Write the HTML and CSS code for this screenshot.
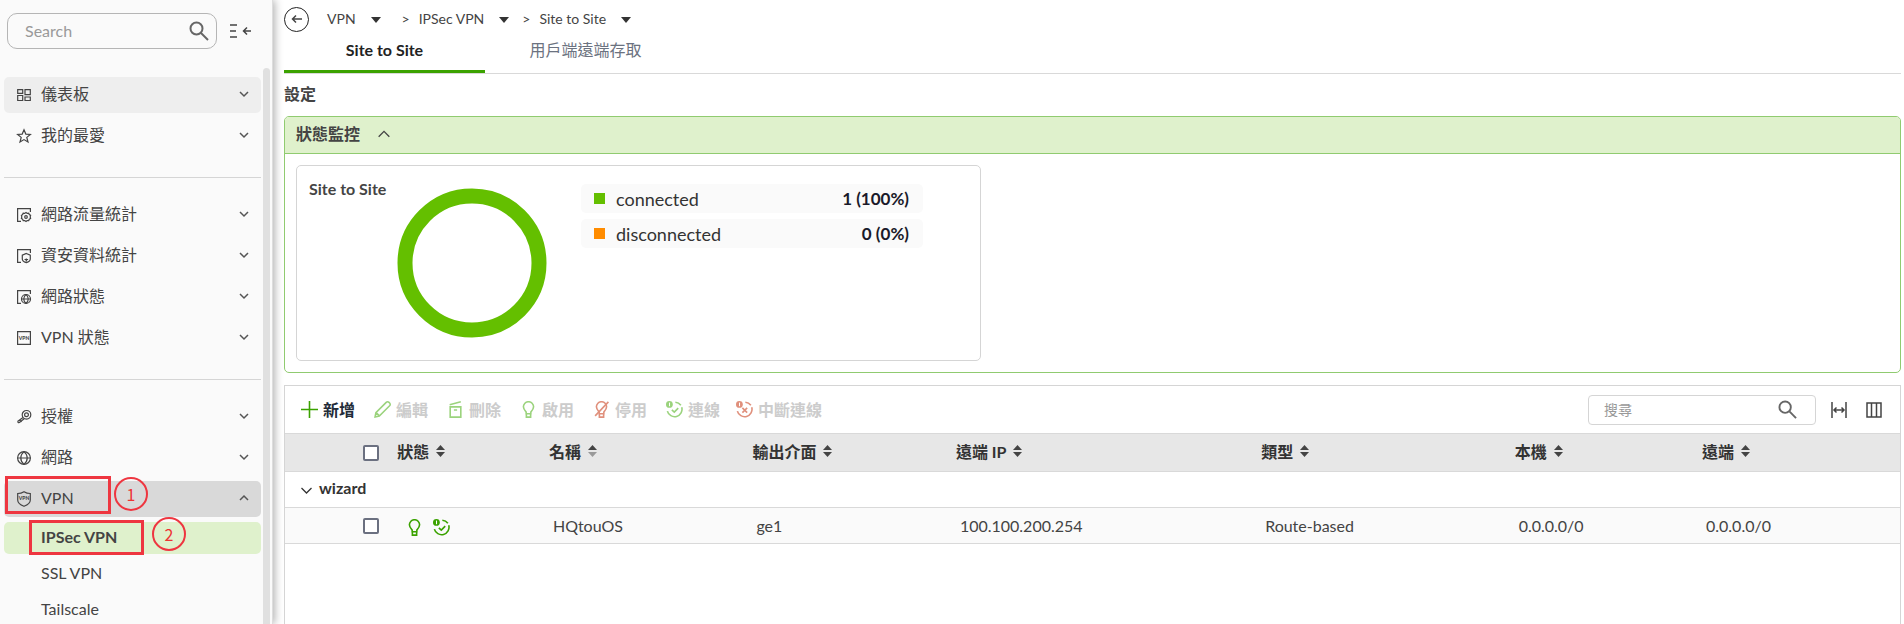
FILE: index.html
```
<!DOCTYPE html>
<html lang="zh-Hant">
<head>
    <meta charset="UTF-8">
    <meta name="viewport" content="width=device-width, initial-scale=1.0">
    <title>IPSec VPN - Site to Site</title>
    <link rel="stylesheet" href="styles.css">
</head>
<body>
    <!-- Icon sprite -->
    <svg class="sprite" aria-hidden="true">
        <symbol id="i-down" viewBox="0 0 12 12"><path d="M2 4l4 4 4-4"/></symbol>
        <symbol id="i-up" viewBox="0 0 12 12"><path d="M2 8l4-4 4 4"/></symbol>
        <symbol id="i-search" viewBox="0 0 20 20"><circle cx="7.5" cy="7.5" r="6"/><path d="M12 12l7 7"/></symbol>
        <symbol id="i-caret" viewBox="0 0 10 6"><path d="M0 0h10L5 6z"/></symbol>
        <symbol id="i-sort" viewBox="0 0 9 12"><path d="M0 5L4.5 0 9 5z"/><path class="sort-down" d="M0 7h9l-4.500 5z"/></symbol>
        <symbol id="i-bulb" viewBox="0 0 16 16"><path d="M5.800 12v-1.500C4 8.500 3.200 7.500 3.200 5.500a4.800 4.800 0 0 1 9.600 0c0 2-.8 3-2.600 5V12zM6 12v3.200h4V12"/></symbol>
        <symbol id="i-link" viewBox="0 0 16 16"><circle class="solid" cx="3.200" cy="3.200" r="3.200"/><path class="mark" d="M3.300 1.500v3.400"/><path d="M8.800 1.200A7 7 0 0 1 14 4M14.800 5.800A7 7 0 1 1 1.300 9.500"/><path d="M5.500 8.300l2.300 2.200 3.700-3.800"/></symbol>
        <symbol id="i-unlink" viewBox="0 0 16 16"><circle class="solid" cx="3.200" cy="3.200" r="3.200"/><path class="mark" d="M3.300 1.500v3.400"/><path d="M8.800 1.200A7 7 0 0 1 14 4M14.800 5.800A7 7 0 1 1 1.300 9.500"/><path d="M6 6.500l4.500 4.500M10.500 6.500L6 11"/></symbol>
    </svg>

    <aside class="sidebar">
        <div class="sidebar-top">
            <label class="side-search">
                <input type="text" placeholder="Search" aria-label="Search">
                <svg class="icon"><use href="#i-search"/></svg>
            </label>
            <button class="collapse" aria-label="Collapse menu">
                <svg class="icon" viewBox="0 0 22 16"><path d="M0 2h7M0 8h6M0 14h7M21 8h-7M17 4.500L13.500 8l3.500 3.500"/></svg>
            </button>
        </div>

        <nav class="menu">
            <a class="item hover" href="#">
                <svg class="icon" viewBox="0 0 14 14"><path d="M.7 1.700h5v3.600h-5zM.7 7.500h5v5h-5zM8 1.700h5.300v5H8zM8 9h5.300v3.500H8z"/></svg>
                <span>儀表板</span><svg class="chev"><use href="#i-down"/></svg>
            </a>
            <a class="item" href="#">
                <svg class="icon" viewBox="0 0 14 14"><path d="M7 .8l1.800 4.300 4.600.3-3.600 3 1.200 4.600L7 10.600 3 13l1.200-4.600-3.600-3 4.600-.3z"/></svg>
                <span>我的最愛</span><svg class="chev"><use href="#i-down"/></svg>
            </a>
            <hr>
            <a class="item" href="#">
                <svg class="icon" viewBox="0 0 14 14"><path d="M4 13.300H.6V.7h12.800V4"/><path d="M9 4.500l1.200.9 1.500-.2.6 1.400 1.300.8-.4 1.500.4 1.500-1.300.8-.6 1.400-1.500-.1L9 13.400l-1.300-.9-1.500.1-.6-1.400-1.200-.8.4-1.500-.4-1.500 1.200-.8.6-1.400 1.500.2z"/><circle cx="9" cy="9" r="1.300"/></svg>
                <span>網路流量統計</span><svg class="chev"><use href="#i-down"/></svg>
            </a>
            <a class="item" href="#">
                <svg class="icon" viewBox="0 0 14 14"><path d="M4 13.300H.6V.7h12.800V4"/><path d="M9.300 4.500l4 1.700V10c0 1.500-2 3-4 3.600-2-.6-4-2.100-4-3.600V6.200z"/><path d="M7.500 10.500h3.600M8.500 12h1.700M9.300 9.500v2"/></svg>
                <span>資安資料統計</span><svg class="chev"><use href="#i-down"/></svg>
            </a>
            <a class="item" href="#">
                <svg class="icon" viewBox="0 0 14 14"><path d="M4 13.300H.6V.7h12.800V4"/><circle cx="9" cy="9" r="4.500"/><path d="M4.500 9h9M9 4.500c-3 2.500-3 6.500 0 9M9 4.500c3 2.500 3 6.500 0 9"/></svg>
                <span>網路狀態</span><svg class="chev"><use href="#i-down"/></svg>
            </a>
            <a class="item" href="#">
                <svg class="icon" viewBox="0 0 14 14"><path d="M.6.6h12.800v12.800H.6z"/><text x="7" y="9">VPN</text></svg>
                <span>VPN 狀態</span><svg class="chev"><use href="#i-down"/></svg>
            </a>
            <hr>
            <a class="item" href="#">
                <svg class="icon" viewBox="0 0 14 14"><circle cx="9.500" cy="4.800" r="4.300"/><circle cx="9.500" cy="4.800" r="1.900"/><path d="M6 7.500L.5 11.500M7.200 8.800L2 12.700M3 10l1.500 2M.5 11.500l1.200 1.700"/></svg>
                <span>授權</span><svg class="chev"><use href="#i-down"/></svg>
            </a>
            <a class="item" href="#">
                <svg class="icon" viewBox="0 0 14 14"><circle cx="7" cy="7" r="6.400"/><path d="M.6 7h12.800M7 .6c-4.300 3.700-4.300 9.100 0 12.800M7 .6c4.300 3.700 4.300 9.100 0 12.800"/></svg>
                <span>網路</span><svg class="chev"><use href="#i-down"/></svg>
            </a>
            <div class="group">
                <a class="item open" href="#">
                    <svg class="icon tall" viewBox="0 0 14 16"><path d="M7 .7C5 2 3 2.500.7 2.500V9c0 3 3 5 6.300 6.300C10.300 14 13.300 12 13.300 9V2.500C11 2.500 9 2 7 .7z"/><text x="7" y="9">VPN</text></svg>
                    <span>VPN</span><svg class="chev"><use href="#i-up"/></svg>
                </a>
                <div class="callout callout-1"></div>
                <div class="step step-1">1</div>
            </div>
            <div class="group">
                <a class="sub active" href="#">IPSec VPN</a>
                <div class="callout callout-2"></div>
                <div class="step step-2">2</div>
            </div>
            <a class="sub" href="#">SSL VPN</a>
            <a class="sub" href="#">Tailscale</a>
        </nav>
        <div class="scrollbar"></div>
    </aside>

    <main class="main">
        <div class="crumbs">
            <button class="back" aria-label="Back">
                <svg class="icon" viewBox="0 0 12 12"><path d="M11 6H1.500M5 2.500L1.500 6 5 9.500"/></svg>
            </button>
            <a href="#">VPN</a>
            <svg class="caret"><use href="#i-caret"/></svg>
            <span class="sep">&gt;</span>
            <a href="#">IPSec VPN</a>
            <svg class="caret"><use href="#i-caret"/></svg>
            <span class="sep">&gt;</span>
            <a href="#">Site to Site</a>
            <svg class="caret"><use href="#i-caret"/></svg>
        </div>

        <div class="tabs">
            <a class="tab active" href="#">Site to Site</a>
            <a class="tab" href="#">用戶端遠端存取</a>
        </div>

        <h2>設定</h2>

        <section class="monitor">
            <button class="monitor-head">狀態監控 <svg class="icon"><use href="#i-up"/></svg></button>
            <div class="monitor-body">
                <div class="card">
                    <h3>Site to Site</h3>
                    <svg class="donut" viewBox="0 0 150 150"><circle cx="75" cy="75" r="67"/></svg>
                    <ul class="legend">
                        <li><i class="dot green"></i>connected<b>1 (100%)</b></li>
                        <li><i class="dot orange"></i>disconnected<b>0 (0%)</b></li>
                    </ul>
                </div>
            </div>
        </section>

        <section class="grid">
            <div class="toolbar">
                <button class="tool"><svg class="icon" viewBox="0 0 16 16"><path d="M8 0v16M0 8h16"/></svg>新增</button>
                <button class="tool" disabled><svg class="icon" viewBox="0 0 16 16"><path d="M1 15l.8-4L11.500 1.300a1.800 1.800 0 0 1 2.600 0l.6.6a1.800 1.800 0 0 1 0 2.600L5 14.200zM2 11l3 3"/></svg>編輯</button>
                <button class="tool" disabled><svg class="icon" viewBox="0 0 16 16"><path d="M3 5.500h10v9.700H3zM2.500 3.500L13 .8M6.500 8.500h3"/></svg>刪除</button>
                <button class="tool" disabled><svg class="icon"><use href="#i-bulb"/></svg>啟用</button>
                <button class="tool red" disabled><svg class="icon" viewBox="0 0 16 16"><use href="#i-bulb" width="16" height="16"/><path d="M2 14L14.500.8"/></svg>停用</button>
                <button class="tool" disabled><svg class="icon"><use href="#i-link"/></svg>連線</button>
                <button class="tool red last" disabled><svg class="icon"><use href="#i-unlink"/></svg>中斷連線</button>

                <label class="grid-search">
                    <input type="text" placeholder="搜尋" aria-label="搜尋">
                    <svg class="icon"><use href="#i-search"/></svg>
                </label>
                <button class="view" aria-label="Fit columns"><svg class="icon" viewBox="0 0 16 16"><path d="M1 0v16M15 0v16M2.500 8h11M5.500 5.500L3 8l2.500 2.500M10.500 5.500L13 8l-2.500 2.500"/></svg></button>
                <button class="view" aria-label="Columns"><svg class="icon" viewBox="0 0 16 16"><path d="M1 1h14v14H1zM5.500 1v14M10.500 1v14"/></svg></button>
            </div>

            <table>
                <colgroup>
                    <col class="c-check"><col class="c-status"><col class="c-name"><col class="c-if">
                    <col class="c-ip"><col class="c-type"><col class="c-local"><col class="c-remote">
                </colgroup>
                <thead>
                    <tr>
                        <th class="check"><input type="checkbox" aria-label="Select all"></th>
                        <th>狀態<svg class="sort"><use href="#i-sort"/></svg></th>
                        <th>名稱<svg class="sort asc"><use href="#i-sort"/></svg></th>
                        <th>輸出介面<svg class="sort"><use href="#i-sort"/></svg></th>
                        <th>遠端 IP<svg class="sort"><use href="#i-sort"/></svg></th>
                        <th>類型<svg class="sort"><use href="#i-sort"/></svg></th>
                        <th>本機<svg class="sort"><use href="#i-sort"/></svg></th>
                        <th>遠端<svg class="sort"><use href="#i-sort"/></svg></th>
                    </tr>
                </thead>
                <tbody>
                    <tr>
                        <td class="group-name" colspan="8"><svg class="icon"><use href="#i-down"/></svg>wizard</td>
                    </tr>
                    <tr class="row">
                        <td class="check"><input type="checkbox" aria-label="Select HQtouOS"></td>
                        <td class="status">
                            <svg class="icon"><use href="#i-bulb"/></svg>
                            <svg class="icon"><use href="#i-link"/></svg>
                        </td>
                        <td>HQtouOS</td>
                        <td>ge1</td>
                        <td>100.100.200.254</td>
                        <td>Route-based</td>
                        <td>0.0.0.0/0</td>
                        <td>0.0.0.0/0</td>
                    </tr>
                </tbody>
            </table>
        </section>
    </main>
</body>
</html>
```
FILE: styles.css
```
* {
    box-sizing: border-box;
}
body {
    margin: 0;
    height: 100vh;
    display: flex;
    overflow: hidden;
    background: #fff;
    color: #444;
    font-family: Lato, "Noto Sans CJK TC", sans-serif;
    font-size: 16px;
    line-height: 24px;
}
a {
    color: inherit;
    text-decoration: none;
}
button {
    padding: 0;
    border: none;
    background: none;
    color: inherit;
    font: inherit;
    cursor: pointer;
}
input[type="text"] {
    flex: 1;
    min-width: 0;
    padding: 0;
    border: none;
    outline: none;
    background: none;
    font: inherit;
}
h2, h3, ul {
    margin: 0;
    padding: 0;
    font-size: 16px;
}
.sprite {
    position: absolute;
    width: 0;
    height: 0;
}
.icon, .chev {
    flex: none;
    fill: none;
    stroke: currentColor;
    overflow: visible;
}

/* Sidebar */
.sidebar {
    position: relative;
    flex: none;
    width: 273px;
    height: 100vh;
    background: #fafafa;
    border-right: 1px solid #ddd;
    box-shadow: 2px 0 8px rgba(0,0,0,0.3);
}
.sidebar-top {
    display: flex;
    align-items: center;
    gap: 13px;
    padding: 13px 20px 0 7px;
}
.side-search {
    display: flex;
    align-items: center;
    width: 210px;
    height: 36px;
    padding: 0 7px 0 17px;
    border: 1px solid #b5b5b5;
    border-radius: 10px;
}
.side-search .icon {
    width: 20px;
    height: 20px;
    color: #666;
    stroke-width: 2;
}
::placeholder {
    color: #999;
    opacity: 1;
}
.collapse .icon {
    display: block;
    width: 22px;
    height: 16px;
    stroke-width: 1.500;
}
.menu {
    height: calc(100vh - 49px);
    padding: 28px 11px 0 4px;
    overflow: hidden;
}
.item {
    display: flex;
    align-items: center;
    gap: 10px;
    height: 36px;
    margin-bottom: 5px;
    padding: 0 11px 2px 13px;
    border-radius: 5px;
}
.item .icon {
    width: 14px;
    height: 14px;
    margin-top: 2px;
    stroke-width: 1.200;
}
.item .icon.tall {
    height: 16px;
}
.item .icon text {
    fill: currentColor;
    stroke: none;
    font-size: 5px;
    font-weight: 900;
    text-anchor: middle;
}
.item .chev {
    width: 12px;
    height: 12px;
    margin-left: auto;
    stroke-width: 1.500;
    color: #555;
}
.item.hover {
    background: #eee;
}
.item.open {
    background: #d9d9d9;
}
.menu hr {
    margin: 23px 0 19px;
    border: none;
    border-top: 1px solid #d5d5d5;
}
.group {
    position: relative;
}
.sub {
    display: flex;
    align-items: center;
    height: 32px;
    margin-bottom: 4px;
    padding: 0 0 2px 37px;
    border-radius: 5px;
}
.sub.active {
    background: #dff1cc;
    font-weight: 700;
}
.scrollbar {
    position: absolute;
    top: 68px;
    right: 2px;
    bottom: 0;
    width: 7px;
    border-radius: 4px 4px 0 0;
    background: #e0e0e0;
}

/* Tutorial marks over the menu */
.callout {
    position: absolute;
    border: 3px solid #ee3640;
}
.callout-1 {
    top: -5px;
    left: 1px;
    width: 106px;
    height: 38px;
}
.callout-2 {
    top: -2px;
    left: 25px;
    width: 115px;
    height: 35px;
}
.step {
    position: absolute;
    width: 34px;
    height: 34px;
    border: 2px solid #ee3640;
    border-radius: 50%;
    color: #e33;
    font-family: "Noto Sans CJK TC", sans-serif;
    font-weight: 400;
    line-height: 30px;
    text-align: center;
}
.step-1 {
    top: -4px;
    left: 110px;
}
.step-2 {
    top: -5px;
    left: 148px;
}

/* Main area */
.main {
    flex: 1;
    min-width: 0;
    display: flex;
    flex-direction: column;
    padding: 6px 3px 0 11px;
}
.crumbs {
    display: flex;
    align-items: center;
    height: 26px;
    font-size: 14px;
}
.back {
    display: flex;
    align-items: center;
    justify-content: center;
    width: 25px;
    height: 25px;
    margin-right: 18px;
    border: 1px solid #222;
    border-radius: 50%;
}
.back .icon {
    width: 12px;
    height: 12px;
    stroke-width: 1.500;
}
.caret {
    width: 10px;
    height: 6px;
    margin: 2px 13px 0 15px;
    fill: #333;
}
.sep {
    margin-right: 9px;
}
.crumbs .caret:first-of-type {
    margin-right: 21px;
}
.tabs {
    display: flex;
    height: 42px;
    border-bottom: 1px solid #d9d9d9;
}
.tab {
    width: 201px;
    height: 41px;
    padding-top: 6px;
    text-align: center;
    color: #6b7280;
}
.tab.active {
    border-bottom: 3px solid #3ba200;
    color: #222;
    font-weight: 700;
}
h2 {
    margin: 8px 0 10px;
}
.monitor {
    border: 1px solid #90cb70;
    border-radius: 5px;
}
.monitor-head {
    display: flex;
    align-items: center;
    gap: 16px;
    width: 100%;
    height: 37px;
    padding: 0 11px 2px;
    border-bottom: 1px solid #90cb70;
    border-radius: 4px 4px 0 0;
    background: #dff1cc;
    font-weight: 700;
}
.monitor-head .icon {
    width: 16px;
    height: 16px;
}
.monitor-body {
    padding: 11px;
}
.card {
    display: flex;
    width: 43%;
    min-height: 196px;
    padding: 0 57px 0 12px;
    border: 1px solid #d5d5d5;
    border-radius: 5px;
}
.card h3 {
    flex: none;
    width: 88px;
    padding-top: 11px;
}
.donut {
    flex: none;
    width: 150px;
    height: 150px;
    margin: 22px 34px 0 0;
    fill: none;
    stroke: #64bf00;
    stroke-width: 15;
}
.legend {
    flex: 1;
    padding-top: 18px;
    list-style: none;
    color: #333;
}
.legend li {
    display: flex;
    align-items: center;
    height: 29px;
    margin-bottom: 6px;
    padding: 0 14px 0 13px;
    border-radius: 5px;
    background: #fafafa;
    font-size: 18px;
}
.legend b {
    margin-left: auto;
    color: #1a1a2a;
    font-size: 17px;
}
.dot {
    width: 11px;
    height: 11px;
    margin-right: 11px;
}
.green {
    background: #64bf00;
}
.orange {
    background: #ff8c00;
}

/* Table */
.grid {
    flex: 1;
    margin-top: 12px;
    border: 1px solid #d5d5d5;
    border-bottom: none;
}
.toolbar {
    display: flex;
    align-items: center;
    gap: 19px;
    height: 47px;
    padding: 0 18px 0 16px;
}
.tool {
    display: flex;
    align-items: center;
    gap: 5px;
    color: #222b38;
    font-weight: 700;
}
.tool .icon {
    width: 17px;
    height: 17px;
    stroke: #3ba200;
    stroke-width: 1.500;
}
.tool.last {
    margin-left: -3px;
}
.tool:disabled {
    color: #ccc;
}
.tool:disabled .icon {
    stroke: #9bd37d;
}
.tool.red:disabled .icon {
    stroke: #e0907c;
}
.solid {
    fill: var(--solid, #9bd37d);
    stroke: none;
}
.red {
    --solid: #e0907c;
}
.mark {
    stroke: #fff;
    stroke-width: 1;
}
.grid-search {
    display: flex;
    align-items: center;
    width: 228px;
    height: 30px;
    margin: 0 -4px 0 auto;
    padding: 0 18px 0 15px;
    border: 1px solid #d5d5d5;
    border-radius: 4px;
    font-size: 14px;
}
.grid-search .icon {
    width: 19px;
    height: 19px;
    color: #666;
    stroke-width: 2;
}
.view .icon {
    display: block;
    width: 16px;
    height: 16px;
    stroke-width: 1.500;
}
table {
    width: 100%;
    border-collapse: collapse;
    table-layout: fixed;
}
.c-check { width: 6.2%; }
.c-status { width: 9.4%; }
.c-name { width: 12.6%; }
.c-if { width: 12.6%; }
.c-ip { width: 18.9%; }
.c-type { width: 15.7%; }
.c-local { width: 11.6%; }
.c-remote { width: 13%; }
th, td {
    padding: 0 0 2px 12px;
    border-top: 1px solid #d9d9d9;
    border-bottom: 1px solid #d9d9d9;
    text-align: left;
}
th {
    height: 38px;
    background: #e7e7e7;
    color: #333;
    font-weight: 700;
}
td {
    height: 36px;
    padding: 0 0 0 16px;
}
.sort {
    width: 9px;
    height: 12px;
    margin-left: 7px;
    fill: #444;
    vertical-align: 1px;
}
.asc {
    --down: #999;
}
.sort-down {
    fill: var(--down, #444);
}
.check {
    padding: 0 6px 0 0;
    text-align: right;
}
input[type="checkbox"] {
    appearance: none;
    display: block;
    width: 16px;
    height: 16px;
    margin: 0 0 0 auto;
    border: 2px solid #6b7080;
    border-radius: 2px;
    background: #fff;
}
.group-name {
    padding: 0 0 3px 14px;
    color: #333;
    font-weight: 700;
}
.group-name .icon {
    width: 15px;
    height: 15px;
    margin-right: 5px;
    vertical-align: -4px;
}
.row {
    background: #fafafa;
}
.status {
    --solid: #3ba200;
    padding-left: 21px;
}
.status .icon {
    width: 17px;
    height: 17px;
    margin-right: 6px;
    stroke: #3ba200;
    stroke-width: 1.500;
    vertical-align: middle;
}
```
